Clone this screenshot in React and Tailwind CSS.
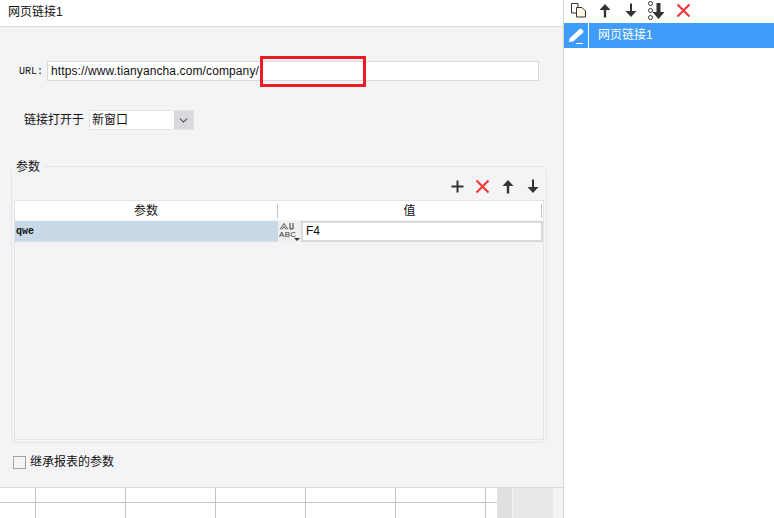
import React from "react";
import { ChevronDown } from "lucide-react";

const FONT = "font-['Liberation_Sans','Noto_Sans_CJK_SC',sans-serif]";

// bottom sheet columns
const COLS = ["w-[36px]", "w-[90px]", "w-[90px]", "w-[90px]", "w-[90px]", "w-[90px]", "w-[11px]"];

function ArrowUpIcon() {
  return (
    <svg width="12" height="15" viewBox="0 0 12 15">
      <path d="M6 1 L11.5 7 H7.2 V14.5 H4.8 V7 H0.5 Z" fill="#333" />
    </svg>
  );
}

function ArrowDownIcon() {
  return (
    <svg width="12" height="15" viewBox="0 0 12 15">
      <path d="M6 14 L11.5 8 H7 V0.5 H5 V8 H0.5 Z" fill="#333" />
    </svg>
  );
}

function RedX({ size = 15 }) {
  return (
    <svg width={size} height={size} viewBox="0 0 15 15">
      <path d="M1.5 1.5 L13.5 13.5 M13.5 1.5 L1.5 13.5" stroke="#ee3b3b" strokeWidth="2.2" fill="none" />
    </svg>
  );
}

function ToolSlot({ children }) {
  return <span className="flex items-center justify-center w-[25px]">{children}</span>;
}

function GridCols() {
  return COLS.map((c, i) => (
    <div key={i} className={`${c} border-r border-[#c4c4c4] last:border-r-0`} />
  ));
}

export default function App() {
  return (
    <div className={`flex w-[774px] h-[518px] overflow-hidden bg-white text-[12px] text-[#111] ${FONT}`}>
      {/* left editor */}
      <div className="flex flex-col w-[564px] h-full border-r border-[#d6d6d6] bg-[#f4f4f6]">
        <div className="h-[27px] shrink-0 bg-white border-b border-[#dcdcdc] pl-2 pt-[3px] leading-[18px]">
          网页链接1
        </div>

        <div className="relative flex items-center h-[20px] mt-[34px] pl-[19px]">
          <span className="w-[28px] font-['Liberation_Mono',monospace] text-[10px]">URL:</span>
          <div className="w-[492px] h-[20px] bg-white border border-[#d9d9d9] pl-[3px] leading-[18px] tracking-[0.11px]">
            https://www.tianyancha.com/company/
          </div>
          {/* red highlight */}
          <div className="absolute left-[260px] top-[-5px] w-[106px] h-[31px] border-[3px] border-[#ed1c24]" />
        </div>

        <div className="flex items-center h-[20px] mt-[29px] pl-[24px]">
          <span className="w-[65px]">链接打开于</span>
          <div className="flex w-[105px] h-[20px] bg-white border border-[#e2e2e2]">
            <span className="flex-1 pl-[2px] leading-[18px]">新窗口</span>
            <span className="flex items-center justify-center w-[19px] bg-[#dadade]">
              <ChevronDown size={13} className="text-[#555]" />
            </span>
          </div>
        </div>

        {/* params group */}
        <div className="relative flex flex-col w-[536px] h-[277px] ml-[11px] mt-[36px] border border-[#e5e5e8] rounded-[6px] px-[2px] pb-[2px]">
          <span className="absolute left-0 top-[-7px] px-[4px] bg-[#f4f4f6] leading-[14px]">参数</span>

          <div className="flex items-center justify-end h-[33px] shrink-0 mr-[-1px] pt-[5px]">
            <ToolSlot>
              <svg width="13" height="13" viewBox="0 0 13 13">
                <path d="M6.5 0.5 V12.5 M0.5 6.5 H12.5" stroke="#333" strokeWidth="2" fill="none" />
              </svg>
            </ToolSlot>
            <ToolSlot>
              <RedX />
            </ToolSlot>
            <ToolSlot>
              <ArrowUpIcon />
            </ToolSlot>
            <ToolSlot>
              <ArrowDownIcon />
            </ToolSlot>
          </div>

          <div className="flex flex-col flex-1 border border-[#e3e3e6]">
            <div className="flex h-[19px] shrink-0 bg-white leading-[22px]">
              <div className="flex items-center justify-center w-[263px]">
                <span className="flex-1 text-center">参数</span>
                <span className="w-px h-[14px] bg-[#c4c4bc]" />
              </div>
              <div className="flex items-center flex-1 pr-[1px]">
                <span className="flex-1 text-center">值</span>
                <span className="w-px h-[14px] bg-[#c4c4bc]" />
              </div>
            </div>
            <div className="flex h-[21px] shrink-0 mt-px">
              <div className="w-[263px] bg-[#c8dae8] border-b border-[#dcdcdc] pl-[1px] font-['Liberation_Mono',monospace] text-[10px] font-bold leading-[22px]">
                qwe
              </div>
              <div className="relative flex flex-col items-start w-[23px] bg-[#f0f0f2] pt-[1px] pl-[1px]">
                <svg width="16" height="8" viewBox="0 0 16 8">
                  <path d="M1 7.5 L5 1.5 L9 7.5 M3 7.5 L5 4.5 L7 7.5" fill="none" stroke="#555" strokeWidth="1" />
                  <path d="M11 1 V7 H14 V1" fill="none" stroke="#333" strokeWidth="1" />
                </svg>
                <span className="text-[8px] leading-[9px] tracking-[0.3px] text-[#333]">ABC</span>
                <span className="absolute right-[1px] bottom-[1px] w-0 h-0 border-x-[3px] border-x-transparent border-t-[3px] border-t-[#333]" />
              </div>
              <div className="flex-1 bg-white border-2 border-[#d9d9d9] pl-[3px] leading-[17px]">F4</div>
            </div>
          </div>
        </div>

        <div className="flex items-center h-[14px] mt-[12px] pl-[13px]">
          <span className="w-[13px] h-[13px] bg-[#f4f4f6] border border-[#a3a3a3]" />
          <span className="ml-[4px]">继承报表的参数</span>
        </div>

        {/* sheet peeking out below */}
        <div className="flex flex-1 mt-[18px] border-t border-[#d9d9d9]">
          <div className="w-[497px] bg-white">
            <div className="flex h-[15px] border-b border-[#c4c4c4]">
              <GridCols />
            </div>
            <div className="flex h-[15px]">
              <GridCols />
            </div>
          </div>
          <div className="w-[15px] bg-[#e0e0e0]" />
          <div className="w-px bg-[#f4f4f6]" />
          <div className="w-[40px] bg-[#e8e8e8]" />
        </div>
      </div>

      {/* right list */}
      <div className="flex flex-col flex-1">
        <div className="flex items-center h-[21px] pl-[6px]">
          <svg width="17" height="16" viewBox="0 0 17 16" className="mb-[2px]">
            <path d="M1.5 1.5 H8 V11 H1.5 Z" fill="#fff" stroke="#333" />
            <path d="M6.5 5.5 H12 L15.5 9 V15 H6.5 Z" fill="#fbf6e2" stroke="#333" />
          </svg>
          <span className="ml-[12px]">
            <ArrowUpIcon />
          </span>
          <span className="ml-[14px]">
            <ArrowDownIcon />
          </span>
          <span className="flex items-center ml-[11px]">
            <span className="flex flex-col gap-[2px] mr-[-1px]">
              <span className="w-[5px] h-[5px] rounded-full border border-[#333]" />
              <span className="w-[5px] h-[5px] rounded-full border border-[#333]" />
              <span className="w-[5px] h-[5px] rounded-full border border-[#333]" />
            </span>
            <svg width="13" height="18" viewBox="0 0 13 18">
              <path d="M6.5 17 L12.5 10 H8.5 V1 H4.5 V10 H0.5 Z" fill="#333" />
            </svg>
          </span>
          <span className="ml-[11px]">
            <RedX size={15} />
          </span>
        </div>
        <div className="flex h-[25px] mt-[2px] bg-[#3f9cf9] text-white">
          <div className="flex items-center justify-center w-[25px] border-r border-white">
            <svg width="17" height="17" viewBox="0 0 17 17">
              <path d="M1.5 11.5 L11 2.5 C12 1.5 13 1.5 14 2.5 L15 3.5 C15.8 4.5 15.5 5.5 14.8 6 L5 14.5 L1 15 Z" fill="#fff" />
              <path d="M8 16.5 H15" stroke="#fff" strokeWidth="1" />
            </svg>
          </div>
          <span className="pl-[9px] leading-[24px]">网页链接1</span>
        </div>
      </div>
    </div>
  );
}
